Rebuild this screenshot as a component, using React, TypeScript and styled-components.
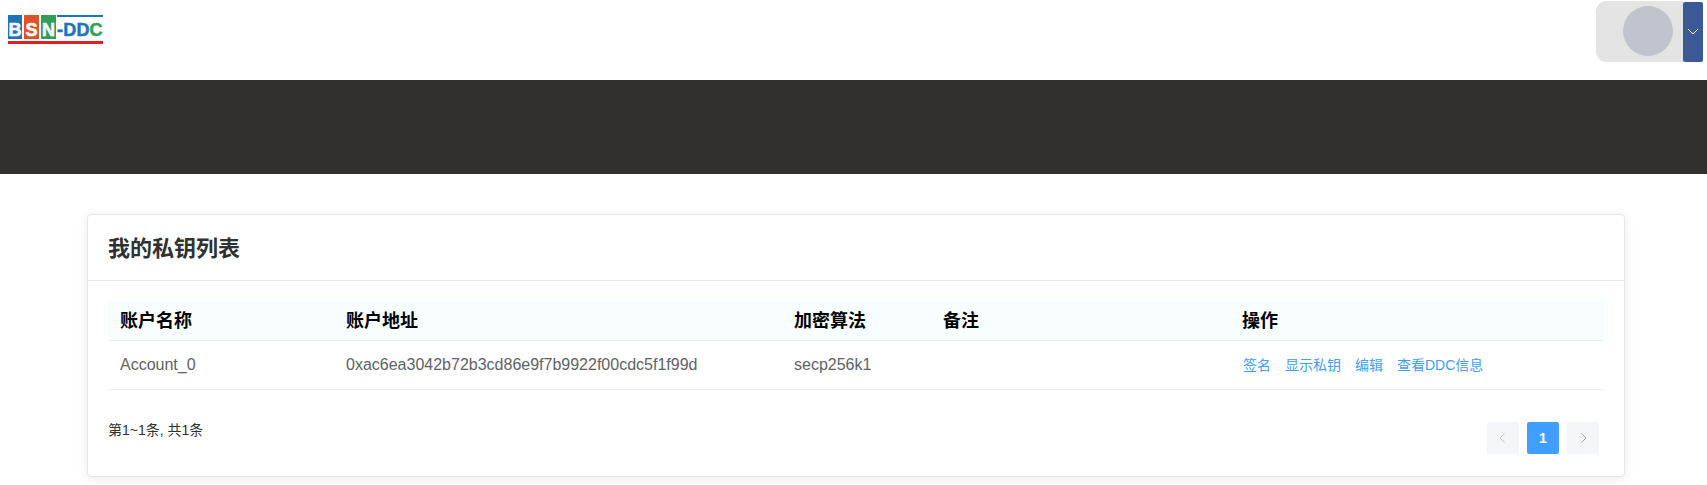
import React from "react";
import styled, { createGlobalStyle } from "styled-components";

const Global = createGlobalStyle`
  html, body { margin: 0; padding: 0; background: #fff; }
  body { font-family: "Liberation Sans", "Noto Sans CJK SC", sans-serif; color: #303133; }
  * { box-sizing: border-box; }
`;

const Page = styled.div`
  width: 1707px;
  height: 485px;
  overflow: hidden;
  display: flex;
  flex-direction: column;
`;

const TopBar = styled.header`
  height: 80px;
  display: flex;
  justify-content: space-between;
  align-items: flex-start;
  padding: 1px 4px 0 8px;
`;

const Logo = styled.div`
  width: 95px;
  height: 29px;
  margin-top: 14px;
  display: flex;
  flex-direction: column;
  justify-content: space-between;
`;

const LogoRow = styled.div`
  display: flex;
  height: 24px;
  gap: 2px;
  align-items: stretch;
`;

const LogoBlock = styled.span<{ $bg: string; $w: number }>`
  width: ${(p) => p.$w}px;
  background: ${(p) => p.$bg};
  color: #f4f8fb;
  font: 700 18px/31px "Liberation Sans", sans-serif;
  -webkit-text-stroke: 0.6px #f4f8fb;
  text-align: center;
`;

const LogoWord = styled.span`
  flex: 1;
  display: flex;
  border-top: 2px solid #1b75b8;
  font: 700 18px/27px "Liberation Sans", sans-serif;
  letter-spacing: 0.2px;
  margin-left: -1px;
  color: #1b75b8;
  -webkit-text-stroke: 0.5px #1b75b8;
`;

const LogoC = styled.span`
  color: #2f9e57;
  -webkit-text-stroke: 0.5px #2f9e57;
`;

const LogoBar = styled.div`
  height: 3px;
  background: #e01f26;
`;

const UserArea = styled.div`
  display: flex;
  align-items: stretch;
  height: 61px;
`;

const AvatarBox = styled.div`
  width: 87px;
  background: #e4e4e5;
  border-radius: 10px 0 0 10px;
  display: flex;
  align-items: center;
  justify-content: center;
  padding: 0 0 1px 17px;
`;

const Avatar = styled.div`
  width: 50px;
  height: 50px;
  border-radius: 50%;
  background: #c0c4cc;
`;

const MenuButton = styled.div`
  width: 20px;
  margin-top: 1px;
  background: #3b5998;
  border-radius: 2px;
  display: flex;
  align-items: center;
  justify-content: center;
`;

const Band = styled.div`
  height: 94px;
  background: #332f2e;
`;

const Main = styled.main`
  padding: 40px 82px 0 87px;
`;

const Card = styled.section`
  height: 263px;
  background: #fff;
  border: 1px solid #e6e8f0;
  border-radius: 4px;
  box-shadow: 0 2px 12px 0 rgba(0, 0, 0, 0.08);
`;

const CardHeader = styled.div`
  height: 66px;
  padding: 0 20px 4px;
  display: flex;
  align-items: center;
  border-bottom: 1px solid #e6e8f0;
`;

const Title = styled.h2`
  margin: 0;
  font-size: 22px;
  font-weight: 700;
  color: #303133;
`;

const CardBody = styled.div`
  padding: 20px 20px 0;
`;

const Table = styled.div`
  width: 1496px;
  font-size: 16px;
`;

const Row = styled.div<{ $head?: boolean }>`
  display: grid;
  grid-template-columns: 226px 448px 149px 299px 374px;
  height: ${(p) => (p.$head ? "40px" : "49px")};
  align-items: center;
  border-bottom: 1px solid #ebeef5;
  background: ${(p) => (p.$head ? "#f8fdff" : "#fff")};
  color: ${(p) => (p.$head ? "#000" : "#606266")};
`;

const Cell = styled.div<{ $head?: boolean }>`
  padding: 0 12px ${(p) => (p.$head ? "3px" : "0")};
  white-space: nowrap;
  font-size: ${(p) => (p.$head ? "18px" : "16px")};
  font-weight: ${(p) => (p.$head ? 700 : 400)};
`;

const Actions = styled.div`
  display: flex;
  gap: 14px;
  padding: 0 12px 2px 13px;
`;

const ActionLink = styled.a`
  font-size: 14px;
  color: #409eff;
  white-space: nowrap;
`;

const Footer = styled.div`
  display: flex;
  justify-content: space-between;
  align-items: flex-start;
  padding: 32px 5px 0 0;
`;

const Total = styled.div`
  font-size: 14px;
  line-height: 16px;
  color: #303133;
`;

const Pager = styled.div`
  display: flex;
  gap: 8px;
`;

const PageButton = styled.div<{ $active?: boolean }>`
  width: 32px;
  height: 32px;
  border-radius: 2px;
  display: flex;
  align-items: center;
  justify-content: center;
  background: ${(p) => (p.$active ? "#409eff" : "#f5f6fa")};
  color: #fff;
  font-size: 14px;
  font-weight: 700;
`;

const Chevron = ({ d, color, size = 12 }: { d: string; color: string; size?: number }) => (
  <svg width={size} height={size} viewBox="0 0 12 12" fill="none" stroke={color} strokeWidth="1">
    <path d={d} />
  </svg>
);

export default function App() {
  return (
    <Page>
      <Global />
      <TopBar>
        <Logo>
          <LogoRow>
            <LogoBlock $bg="#1b75b8" $w={14}>B</LogoBlock>
            <LogoBlock $bg="#e0512a" $w={15}>S</LogoBlock>
            <LogoBlock $bg="#2f9e57" $w={15}>N</LogoBlock>
            <LogoWord>
              -DD<LogoC>C</LogoC>
            </LogoWord>
          </LogoRow>
          <LogoBar />
        </Logo>
        <UserArea>
          <AvatarBox>
            <Avatar />
          </AvatarBox>
          <MenuButton>
            <Chevron d="M1 3 L6 8 L11 3" color="#fff" />
          </MenuButton>
        </UserArea>
      </TopBar>
      <Band />
      <Main>
        <Card>
          <CardHeader>
            <Title>我的私钥列表</Title>
          </CardHeader>
          <CardBody>
            <Table>
              <Row $head>
                <Cell $head>账户名称</Cell>
                <Cell $head>账户地址</Cell>
                <Cell $head>加密算法</Cell>
                <Cell $head>备注</Cell>
                <Cell $head>操作</Cell>
              </Row>
              <Row>
                <Cell>Account_0</Cell>
                <Cell>0xac6ea3042b72b3cd86e9f7b9922f00cdc5f1f99d</Cell>
                <Cell>secp256k1</Cell>
                <Cell />
                <Actions>
                  <ActionLink>签名</ActionLink>
                  <ActionLink>显示私钥</ActionLink>
                  <ActionLink>编辑</ActionLink>
                  <ActionLink>查看DDC信息</ActionLink>
                </Actions>
              </Row>
            </Table>
            <Footer>
              <Total>第1~1条, 共1条</Total>
              <Pager>
                <PageButton>
                  <Chevron d="M7.5 1.5 L3 6 L7.5 10.5" color="#c0c4cc" />
                </PageButton>
                <PageButton $active>1</PageButton>
                <PageButton>
                  <Chevron d="M4.5 1.5 L9 6 L4.5 10.5" color="#a8abb2" />
                </PageButton>
              </Pager>
            </Footer>
          </CardBody>
        </Card>
      </Main>
    </Page>
  );
}
